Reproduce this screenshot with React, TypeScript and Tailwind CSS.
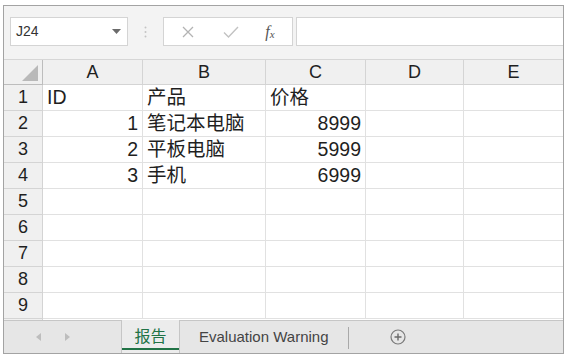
import React from "react";

const cols = [
  { label: "A", w: "w-[100px]" },
  { label: "B", w: "w-[123px]" },
  { label: "C", w: "w-[100px]" },
  { label: "D", w: "w-[98px]" },
  { label: "E", w: "flex-1" },
];

type Cell = { text: string; align?: "left" | "right" };

const rows: Cell[][] = [
  [{ text: "ID" }, { text: "产品" }, { text: "价格" }],
  [{ text: "1", align: "right" }, { text: "笔记本电脑" }, { text: "8999", align: "right" }],
  [{ text: "2", align: "right" }, { text: "平板电脑" }, { text: "5999", align: "right" }],
  [{ text: "3", align: "right" }, { text: "手机" }, { text: "6999", align: "right" }],
  [],
  [],
  [],
  [],
  [],
];

const font = "font-[Liberation_Sans,Noto_Sans_CJK_SC,sans-serif]";

function Toolbar() {
  return (
    <div className="flex h-[53px] items-start bg-[#f3f3f3] pt-[11px] pl-[6px]">
      {/* Name box */}
      <div className="flex h-[29px] w-[118px] items-center justify-between border border-[#d4d4d4] bg-white pl-[5px] pr-[6px]">
        <span className="text-[14px] text-[#333]">J24</span>
        <svg width="9" height="5" viewBox="0 0 9 5">
          <path d="M0 0h9L4.5 5z" fill="#6b6b6b" />
        </svg>
      </div>
      {/* dots */}
      <div className="flex h-[29px] w-[35px] items-center justify-center">
        <svg width="3" height="12" viewBox="0 0 3 12">
          <circle cx="1.5" cy="1.5" r="1" fill="#c4c4c4" />
          <circle cx="1.5" cy="6" r="1" fill="#c4c4c4" />
          <circle cx="1.5" cy="10.5" r="1" fill="#c4c4c4" />
        </svg>
      </div>
      {/* formula buttons */}
      <div className="flex h-[29px] w-[130px] items-center border border-[#d4d4d4] bg-white">
        <div className="flex w-[48px] justify-center">
          <svg width="12" height="12" viewBox="0 0 12 12">
            <path d="M1 1l10 10M11 1L1 11" stroke="#b3b3b3" strokeWidth="1.3" />
          </svg>
        </div>
        <div className="flex w-[38px] justify-center">
          <svg width="16" height="12" viewBox="0 0 16 12">
            <path d="M1 6.5l4.5 4.5L15 1" stroke="#c2c2c2" strokeWidth="1.4" fill="none" />
          </svg>
        </div>
        <div className="flex w-[40px] items-baseline justify-center font-[Liberation_Serif,serif] italic leading-none text-[#555]">
          <span className="text-[16px]">f</span>
          <span className="relative top-[1px] text-[11px]">x</span>
        </div>
      </div>
      {/* formula input */}
      <div className="ml-[3px] h-[29px] flex-1 border border-r-0 border-[#d4d4d4] bg-white" />
    </div>
  );
}

function Grid() {
  return (
    <div className={`${font} text-[#1f1f1f]`}>
      {/* header row */}
      <div className="flex h-[26px] border-t border-[#d6d6d6] bg-[#f0f0f0]">
        <div className="relative w-[39px] shrink-0 border-r border-b border-[#bdbdbd]">
          <svg className="absolute left-[18px] top-[5px]" width="16" height="16" viewBox="0 0 16 16">
            <path d="M16 0V16H0z" fill="#b9b9b9" />
          </svg>
        </div>
        {cols.map((c) => (
          <div
            key={c.label}
            className={`${c.w} flex shrink-0 items-center justify-center border-r border-b border-[#d4d4d4] text-[18px] last:border-r-0`}
          >
            {c.label}
          </div>
        ))}
      </div>
      {rows.map((r, i) => (
        <div key={i} className="flex h-[26px]">
          <div className="flex w-[39px] shrink-0 items-center justify-center border-r border-b border-[#d4d4d4] bg-[#f0f0f0] text-[18px]">
            {i + 1}
          </div>
          {cols.map((c, j) => {
            const cell = r[j];
            return (
              <div
                key={c.label}
                className={`${c.w} flex shrink-0 items-center border-r border-b border-[#e1e1e1] px-[4px] text-[19.5px] leading-none last:border-r-0 ${
                  cell?.align === "right" ? "justify-end" : "justify-start"
                }`}
              >
                {cell?.text}
              </div>
            );
          })}
        </div>
      ))}
      <div className="flex h-[1px]">
        <div className="w-[39px] shrink-0 border-r border-[#d4d4d4] bg-[#f0f0f0]" />
        <div className="flex-1 bg-white" />
      </div>
    </div>
  );
}

function Tabs() {
  return (
    <div className={`${font} flex h-[33px] items-stretch border-t border-[#c6c6c6] bg-[#e6e6e6]`}>
      <div className="flex w-[117px] items-center pl-[32px] gap-[24px]">
        <svg width="5" height="8" viewBox="0 0 5 8">
          <path d="M5 0v8L0 4z" fill="#bdbdbd" />
        </svg>
        <svg width="5" height="8" viewBox="0 0 5 8">
          <path d="M0 0v8l5-4z" fill="#bdbdbd" />
        </svg>
      </div>
      <div className="relative -mt-px flex w-[59px] items-center justify-center border-x border-[#c6c6c6] bg-[#ececec] text-[16px] text-[#217346]">
        报告
        <div className="absolute bottom-[3px] left-0 right-0 h-[2px] bg-[#217346]" />
      </div>
      <div className="flex items-center pl-[19px] text-[15px] text-[#444]">Evaluation Warning</div>
      <div className="ml-[19px] mt-[6px] h-[22px] w-px bg-[#a9a9a9]" />
      <div className="ml-[41px] flex items-center">
        <svg width="16" height="16" viewBox="0 0 16 16">
          <circle cx="8" cy="8" r="7" stroke="#7a7a7a" strokeWidth="1.2" fill="none" />
          <path d="M8 4.5v7M4.5 8h7" stroke="#6a6a6a" strokeWidth="1.4" />
        </svg>
      </div>
    </div>
  );
}

export default function App() {
  return (
    <div className="h-[361px] w-[570px] bg-white pt-[5px] pl-[3px]">
      <div className={`${font} w-[561px] overflow-hidden border border-[#a3a3a3]`}>
        <Toolbar />
        <Grid />
        <Tabs />
      </div>
    </div>
  );
}
